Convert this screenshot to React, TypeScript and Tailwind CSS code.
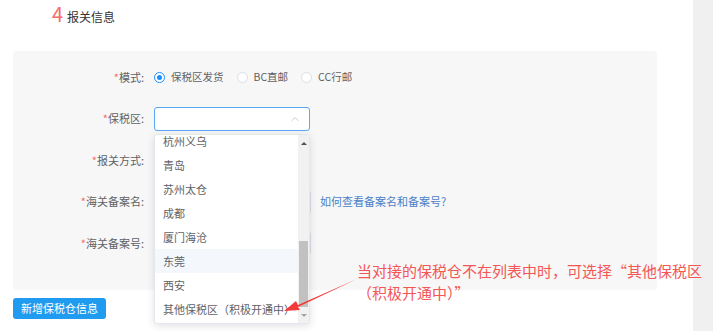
import { ChevronUp } from 'lucide-react'

const font = { fontFamily: '"Noto Sans CJK SC", "Noto Sans", sans-serif' }

const options = ['杭州义乌', '青岛', '苏州太仓', '成都', '厦门海沧', '东莞', '西安', '其他保税区（积极开通中）']

function Label({ text }: { text: string }) {
  return (
    <div className="w-[132px] shrink-0 text-right text-[11px] text-[#606266] pr-[1px]">
      <span className="text-[#f56c6c]">*</span>
      {text}:
    </div>
  )
}

function Radio({ label, checked }: { label: string; checked?: boolean }) {
  return (
    <div className="flex items-center gap-[6px] text-[10.5px] text-[#606266]">
      <span
        className={`w-[11px] h-[11px] rounded-full border flex items-center justify-center bg-white ${
          checked ? 'border-[#1890ff]' : 'border-[#dcdfe6]'
        }`}
      >
        {checked && <span className="w-[5px] h-[5px] rounded-full bg-[#1890ff]" />}
      </span>
      <span>{label}</span>
    </div>
  )
}

export default function App() {
  return (
    <div className="flex w-[713px] h-[331px] bg-white overflow-hidden" style={font}>
      <div className="relative flex-1">
        {/* Title */}
        <div className="flex items-baseline gap-[4px] pl-[52px] pt-[3px] h-[25px]">
          <span className="text-[20px] leading-[22px] text-[#f56c6c]">4</span>
          <span className="text-[12px] text-[#333]">报关信息</span>
        </div>

        {/* Form panel */}
        <div className="ml-[13px] mt-[26px] w-[644px] h-[239px] rounded-[4px] bg-[#f7f7f7] pt-[14px] flex flex-col gap-[17.5px]">
          <div className="flex items-center h-[24px] gap-[9px]">
            <Label text="模式" />
            <div className="flex items-center gap-[13px]">
              <Radio label="保税区发货" checked />
              <Radio label="BC直邮" />
              <Radio label="CC行邮" />
            </div>
          </div>
          <div className="flex items-center h-[24px] gap-[9px]">
            <Label text="保税区" />
            <div className="w-[156px] h-[24px] rounded-[3px] border border-[#5aa9f7] bg-white flex items-center justify-end pr-[8px]">
              <ChevronUp className="w-[12px] h-[12px] text-[#b4b8bf]" strokeWidth={1.5} />
            </div>
          </div>
          <div className="flex items-center h-[24px] gap-[9px]">
            <Label text="报关方式" />
          </div>
          <div className="flex items-center h-[24px] gap-[9px]">
            <Label text="海关备案名" />
            <div className="w-[157px] h-[24px] rounded-[3px] border border-[#dcdfe6] bg-white" />
            <span className="text-[11px] text-[#4a7fc8]">如何查看备案名和备案号?</span>
          </div>
          <div className="flex items-center h-[24px] gap-[9px]">
            <Label text="海关备案号" />
            <div className="w-[157px] h-[24px] rounded-[3px] border border-[#dcdfe6] bg-white" />
          </div>
        </div>

        <button className="ml-[13px] mt-[8px] h-[21px] px-[8px] rounded-[3px] bg-[#1f9cf0] text-white text-[11px]">
          新增保税仓信息
        </button>

        {/* Dropdown */}
        <div className="absolute left-[154px] top-[134px] w-[156px] h-[190px] bg-white border border-[#e4e7ed] rounded-[3px] shadow-[0_2px_8px_rgba(0,0,0,0.12)] flex overflow-hidden">
          <div className="flex-1 overflow-hidden">
            <div className="-mt-[6px]">
              {options.map((o) => (
                <div
                  key={o}
                  className={`h-[24px] flex items-center pl-[8px] text-[11px] text-[#606266] whitespace-nowrap ${
                    o === '东莞' ? 'bg-[#f4f8fd]' : ''
                  }`}
                >
                  {o}
                </div>
              ))}
            </div>
          </div>
          <div className="w-[11px] bg-[#f1f1f1] flex flex-col">
            <div className="h-[16px] flex items-center justify-center">
              <span className="w-0 h-0 border-x-[3px] border-x-transparent border-b-[3px] border-b-[#505050]" />
            </div>
            <div className="h-[90px]" />
            <div className="mx-[1px] h-[66px] bg-[#c1c1c1]" />
            <div className="flex-1 flex items-center justify-center">
              <span className="w-0 h-0 border-x-[3px] border-x-transparent border-t-[3px] border-t-[#a3a3a3]" />
            </div>
          </div>
        </div>

        {/* Annotation */}
        <svg className="absolute left-[280px] top-[275px]" width="80" height="42" viewBox="0 0 80 42">
          <path d="M77 4 L18 30 L16 26 L4 36 L20 35 L18 32 Z" fill="#f23a3a" />
        </svg>
        <div className="absolute left-[357px] top-[260px] text-[15px] leading-[22px] text-[#f45656] whitespace-nowrap">
          <div>当对接的保税仓不在列表中时，可选择“其他保税区</div>
          <div>（积极开通中）”</div>
        </div>
      </div>
      <div className="w-[20px] h-full bg-[#f0f0f0]" />
    </div>
  )
}
